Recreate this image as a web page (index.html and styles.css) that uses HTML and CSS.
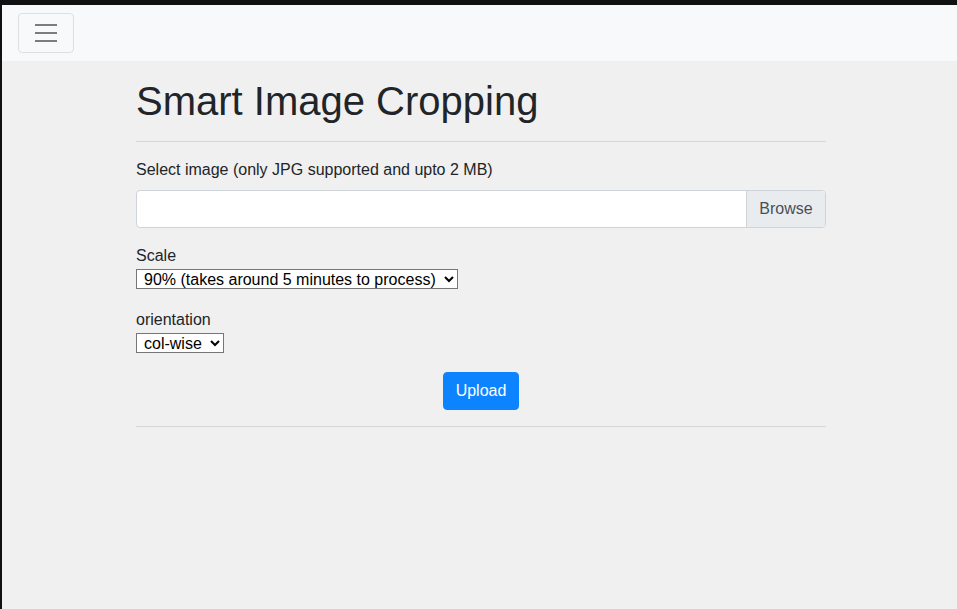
FILE: index.html
```html
<!DOCTYPE html>
<html lang="en">
<head>
<meta charset="utf-8">
<title>Smart Image Cropping</title>
<link rel="stylesheet" href="styles.css">
</head>
<body>
<div class="frame">
  <nav class="navbar">
    <button class="navbar-toggler" type="button" aria-label="Toggle navigation">
      <svg class="toggler-icon" width="30" height="30" viewBox="0 0 30 30" aria-hidden="true">
        <path d="M4 7h22M4 15h22M4 23h22" stroke="rgba(0,0,0,0.5)" stroke-width="2" stroke-linecap="butt" fill="none"/>
      </svg>
    </button>
  </nav>
  <div class="page">
    <main class="container">
      <h1 class="title">Smart Image Cropping</h1>
      <hr class="rule">
      <form class="upload-form">
        <div class="form-group">
          <label class="label" for="file">Select image (only JPG supported and upto 2 MB)</label>
          <div class="custom-file">
            <span class="file-label"></span>
            <span class="file-browse">Browse</span>
          </div>
        </div>
        <div class="form-group">
          <label class="label" for="scale">Scale</label>
          <div class="select-line">
            <select id="scale" class="native-select">
              <option>90% (takes around 5 minutes to process)</option>
            </select>
          </div>
        </div>
        <div class="form-group">
          <label class="label" for="orientation">orientation</label>
          <div class="select-line">
            <select id="orientation" class="native-select">
              <option>col-wise</option>
            </select>
          </div>
        </div>
        <div class="actions">
          <button type="button" class="btn-primary">Upload</button>
        </div>
      </form>
      <hr class="rule rule-bottom">
    </main>
  </div>
</div>
</body>
</html>
```

FILE: styles.css
```css
* { box-sizing: border-box; }

html, body {
  margin: 0;
  padding: 0;
  height: 100%;
}

body {
  font-family: "Liberation Sans", Arial, sans-serif;
  font-size: 16px;
  line-height: 1.5;
  color: #212529;
  background: #111111;
}

.frame {
  margin-top: 5px;
  margin-left: 2px;
  background: #f0f0f0;
  height: calc(100% - 5px);
}

.navbar {
  display: flex;
  align-items: center;
  background: #f8f9fa;
  padding: 8px 16px;
  height: 56px;
}

.navbar-toggler {
  display: flex;
  align-items: center;
  justify-content: center;
  width: 56px;
  height: 40px;
  padding: 4px 12px;
  background: transparent;
  border: 1px solid rgba(0, 0, 0, 0.1);
  border-radius: 4px;
  cursor: pointer;
}

.toggler-icon { display: block; }

.page {
  padding-left: 3px;
}

.container {
  max-width: 720px;
  margin: 0 auto;
  padding: 16px 15px 0;
}

.title {
  margin: 0;
  font-size: 40px;
  font-weight: 400;
  line-height: 48px;
  color: #212529;
}

.rule {
  margin: 16px 0;
  border: 0;
  border-top: 1px solid rgba(0, 0, 0, 0.1);
  height: 0;
}

.rule-bottom { margin-top: 16px; }

.form-group { margin-bottom: 16px; }

.label {
  display: block;
  line-height: 24px;
}

.form-group:first-child .label { margin-bottom: 8px; }

.custom-file {
  display: flex;
  height: 38px;
  background: #fff;
  border: 1px solid #ced4da;
  border-radius: 4px;
  overflow: hidden;
}

.file-label { flex: 1; }

.file-browse {
  display: flex;
  align-items: center;
  justify-content: center;
  padding: 6px 0;
  background: #e9ecef;
  border-left: 1px solid #ced4da;
  color: #495057;
  line-height: 24px;
  width: 79px;
}

.select-line {
  height: 24px;
  padding-top: 1px;
}

.native-select {
  display: block;
  height: 20px;
  font-family: "Liberation Sans", Arial, sans-serif;
  font-size: 16px;
  color: #000;
  background: #fff;
  border: 1px solid #767676;
  border-radius: 0;
  padding: 0 5px 0 3px;
}

.actions {
  display: flex;
  justify-content: center;
}

.btn-primary {
  font-family: "Liberation Sans", Arial, sans-serif;
  font-size: 16px;
  line-height: 24px;
  padding: 6px 12px;
  color: #fff;
  background: #0d84ff;
  border: 1px solid #0d84ff;
  border-radius: 4px;
  cursor: pointer;
}
```
